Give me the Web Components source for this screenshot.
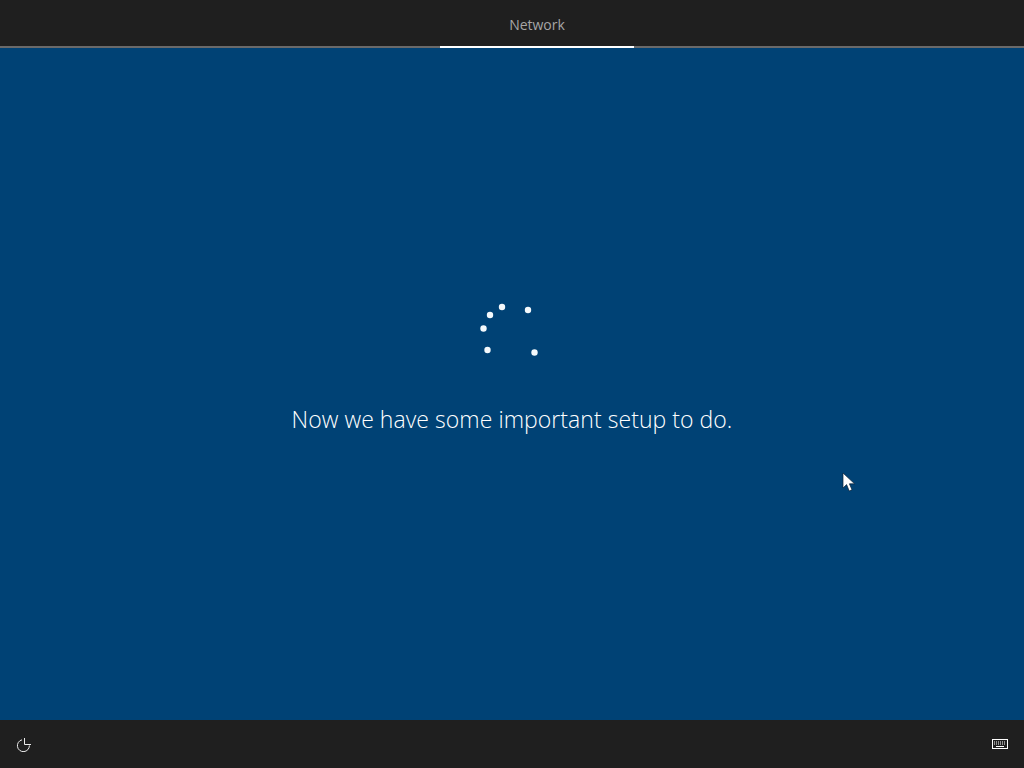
<!DOCTYPE html>
<html lang="en">
<head>
<meta charset="utf-8">
<title>Setup</title>
<style>
  html, body { margin: 0; height: 100%; background: #004275; overflow: hidden; }
  body { font-family: "Open Sans", "Noto Sans", sans-serif; }
</style>
</head>
<body>
<setup-screen>
  <setup-tab slot="top">Network</setup-tab>
  <setup-spinner></setup-spinner>
  <span slot="message">Now we have some important setup to do.</span>
  <setup-icon slot="left" name="clock"></setup-icon>
  <setup-icon slot="right" name="keyboard"></setup-icon>
</setup-screen>

<script>
class SetupScreen extends HTMLElement {
    constructor() {
        super();
        this.attachShadow({ mode: 'open' }).innerHTML = `
            <style>
                :host {
                    display: flex;
                    flex-direction: column;
                    position: relative;
                    width: 1024px;
                    height: 768px;
                    overflow: hidden;
                }
                .top {
                    height: 48px;
                    box-sizing: border-box;
                    padding-left: 50px;
                    display: flex;
                    justify-content: center;
                    background: #1f1f1f;
                    border-bottom: 2px solid #6a6a6a;
                }
                .main {
                    flex: 1;
                    background: #004275;
                    display: flex;
                    flex-direction: column;
                    align-items: center;
                    padding-top: 247px;
                    color: #fff;
                    font-size: 23px;
                    font-weight: 300;
                    letter-spacing: .05px;
                    line-height: 32px;
                }
                .message { margin-top: 38px; white-space: nowrap; }
                .bottom {
                    height: 48px;
                    box-sizing: border-box;
                    padding: 0 16px;
                    display: flex;
                    justify-content: space-between;
                    align-items: center;
                    background: #1f1f1f;
                }
                .cursor { position: absolute; left: 842px; top: 472px; }
            </style>
            <div class="top"><slot name="top"></slot></div>
            <div class="main">
                <slot></slot>
                <div class="message"><slot name="message"></slot></div>
            </div>
            <div class="bottom">
                <slot name="left"></slot>
                <slot name="right"></slot>
            </div>
            <svg class="cursor" width="14" height="20" viewBox="0 0 14 20">
                <path d="M1 1v15l3.6-3.4L7.200 19l2.800-1.200-2.600-6h5.200z" fill="#fff" stroke="#0a2033" stroke-width=".7"/>
            </svg>
        `;
    }
}

class SetupTab extends HTMLElement {
    constructor() {
        super();
        this.attachShadow({ mode: 'open' }).innerHTML = `
            <style>
                :host {
                    display: block;
                    width: 194px;
                    height: 48px;
                    box-sizing: border-box;
                    border-bottom: 2px solid #fff;
                    color: #a6a6a6;
                    font-size: 14px;
                    line-height: 50px;
                    text-align: center;
                }
            </style>
            <slot></slot>
        `;
    }
}

class SetupSpinner extends HTMLElement {
    constructor() {
        super();
        // dots of the loading ring, as they stood when the picture was taken
        const dots = [[30, 12], [56, 15], [18, 20], [11.500, 33.500], [15.500, 55], [62.500, 57.500]];
        const circles = dots.map(([x, y]) => `<circle cx="${x}" cy="${y}" r="3.2"/>`).join('');
        this.attachShadow({ mode: 'open' }).innerHTML = `
            <style>
                :host { display: block; width: 80px; height: 70px; }
                svg { display: block; fill: #f4f9fc; }
            </style>
            <svg width="80" height="70" viewBox="0 0 80 70">${circles}</svg>
        `;
    }
}

class SetupIcon extends HTMLElement {
    constructor() {
        super();
        const icons = {
            clock: `<svg width="16" height="16" viewBox="0 0 16 16" fill="none" stroke="#ececec">
                        <path d="M6 3.800A6 6 0 1 0 13.400 9.500"/>
                        <path d="M8.500 2V8.500H15"/>
                    </svg>`,
            keyboard: `<svg width="16" height="10" viewBox="0 0 16 10" fill="none" stroke="#fff">
                        <rect x=".5" y=".5" width="15" height="9"/>
                        <path d="M2 3h12M2 5h12" stroke-dasharray="1 1"/>
                        <path d="M4 7.500h8"/>
                    </svg>`
        };
        this.attachShadow({ mode: 'open' }).innerHTML = `
            <style>
                :host { display: block; line-height: 0; }
            </style>
            ${icons[this.getAttribute('name')]}
        `;
    }
}

customElements.define('setup-screen', SetupScreen);
customElements.define('setup-tab', SetupTab);
customElements.define('setup-spinner', SetupSpinner);
customElements.define('setup-icon', SetupIcon);
</script>
</body>
</html>
